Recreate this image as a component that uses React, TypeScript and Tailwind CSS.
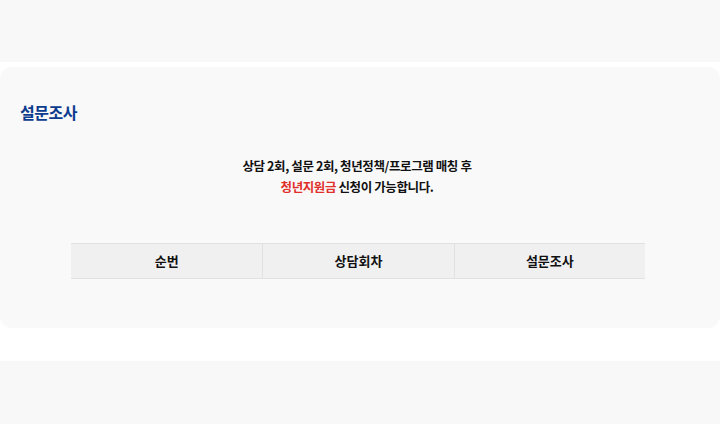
import React from 'react';

const cols = ['순번', '상담회차', '설문조사'];

export default function App() {
  return (
    <div
      className="w-[720px] h-[424px] overflow-hidden bg-white"
      style={{ fontFamily: '"Noto Sans CJK KR", "Noto Sans", sans-serif' }}
    >
      {/* 상단 패널 */}
      <div className="h-[62px] bg-[#f8f8f8]" />

      {/* 설문조사 카드 */}
      <section className="mt-[5px] h-[261px] rounded-[12px] bg-[#f9f9f9] px-5 pt-[33px]">
        <h2 className="text-[16px] leading-[24px] font-bold text-[#0d3c8f] tracking-[-0.5px]">설문조사</h2>

        <div className="mt-[31px] pr-[6px] text-center text-[12.5px] leading-[21px] font-bold text-[#111] tracking-[-0.4px]">
          <p>상담 2회, 설문 2회, 청년정책/프로그램 매칭 후</p>
          <p>
            <span className="text-[#e0302c]">청년지원금</span> 신청이 가능합니다.
          </p>
        </div>

        <div className="mt-[46px] ml-[51px] w-[574px] grid grid-cols-3 border-t border-b border-[#e2e2e2] bg-[#f0f0f0]">
          {cols.map((c, i) => (
            <div
              key={c}
              className={
                'h-[34px] flex items-center justify-center text-[13px] font-bold text-[#111] ' +
                (i > 0 ? 'border-l border-[#e2e2e2]' : '')
              }
            >
              {c}
            </div>
          ))}
        </div>
      </section>

      {/* 하단 패널 */}
      <div className="mt-[33px] h-[63px] bg-[#f8f8f8]" />
    </div>
  );
}
